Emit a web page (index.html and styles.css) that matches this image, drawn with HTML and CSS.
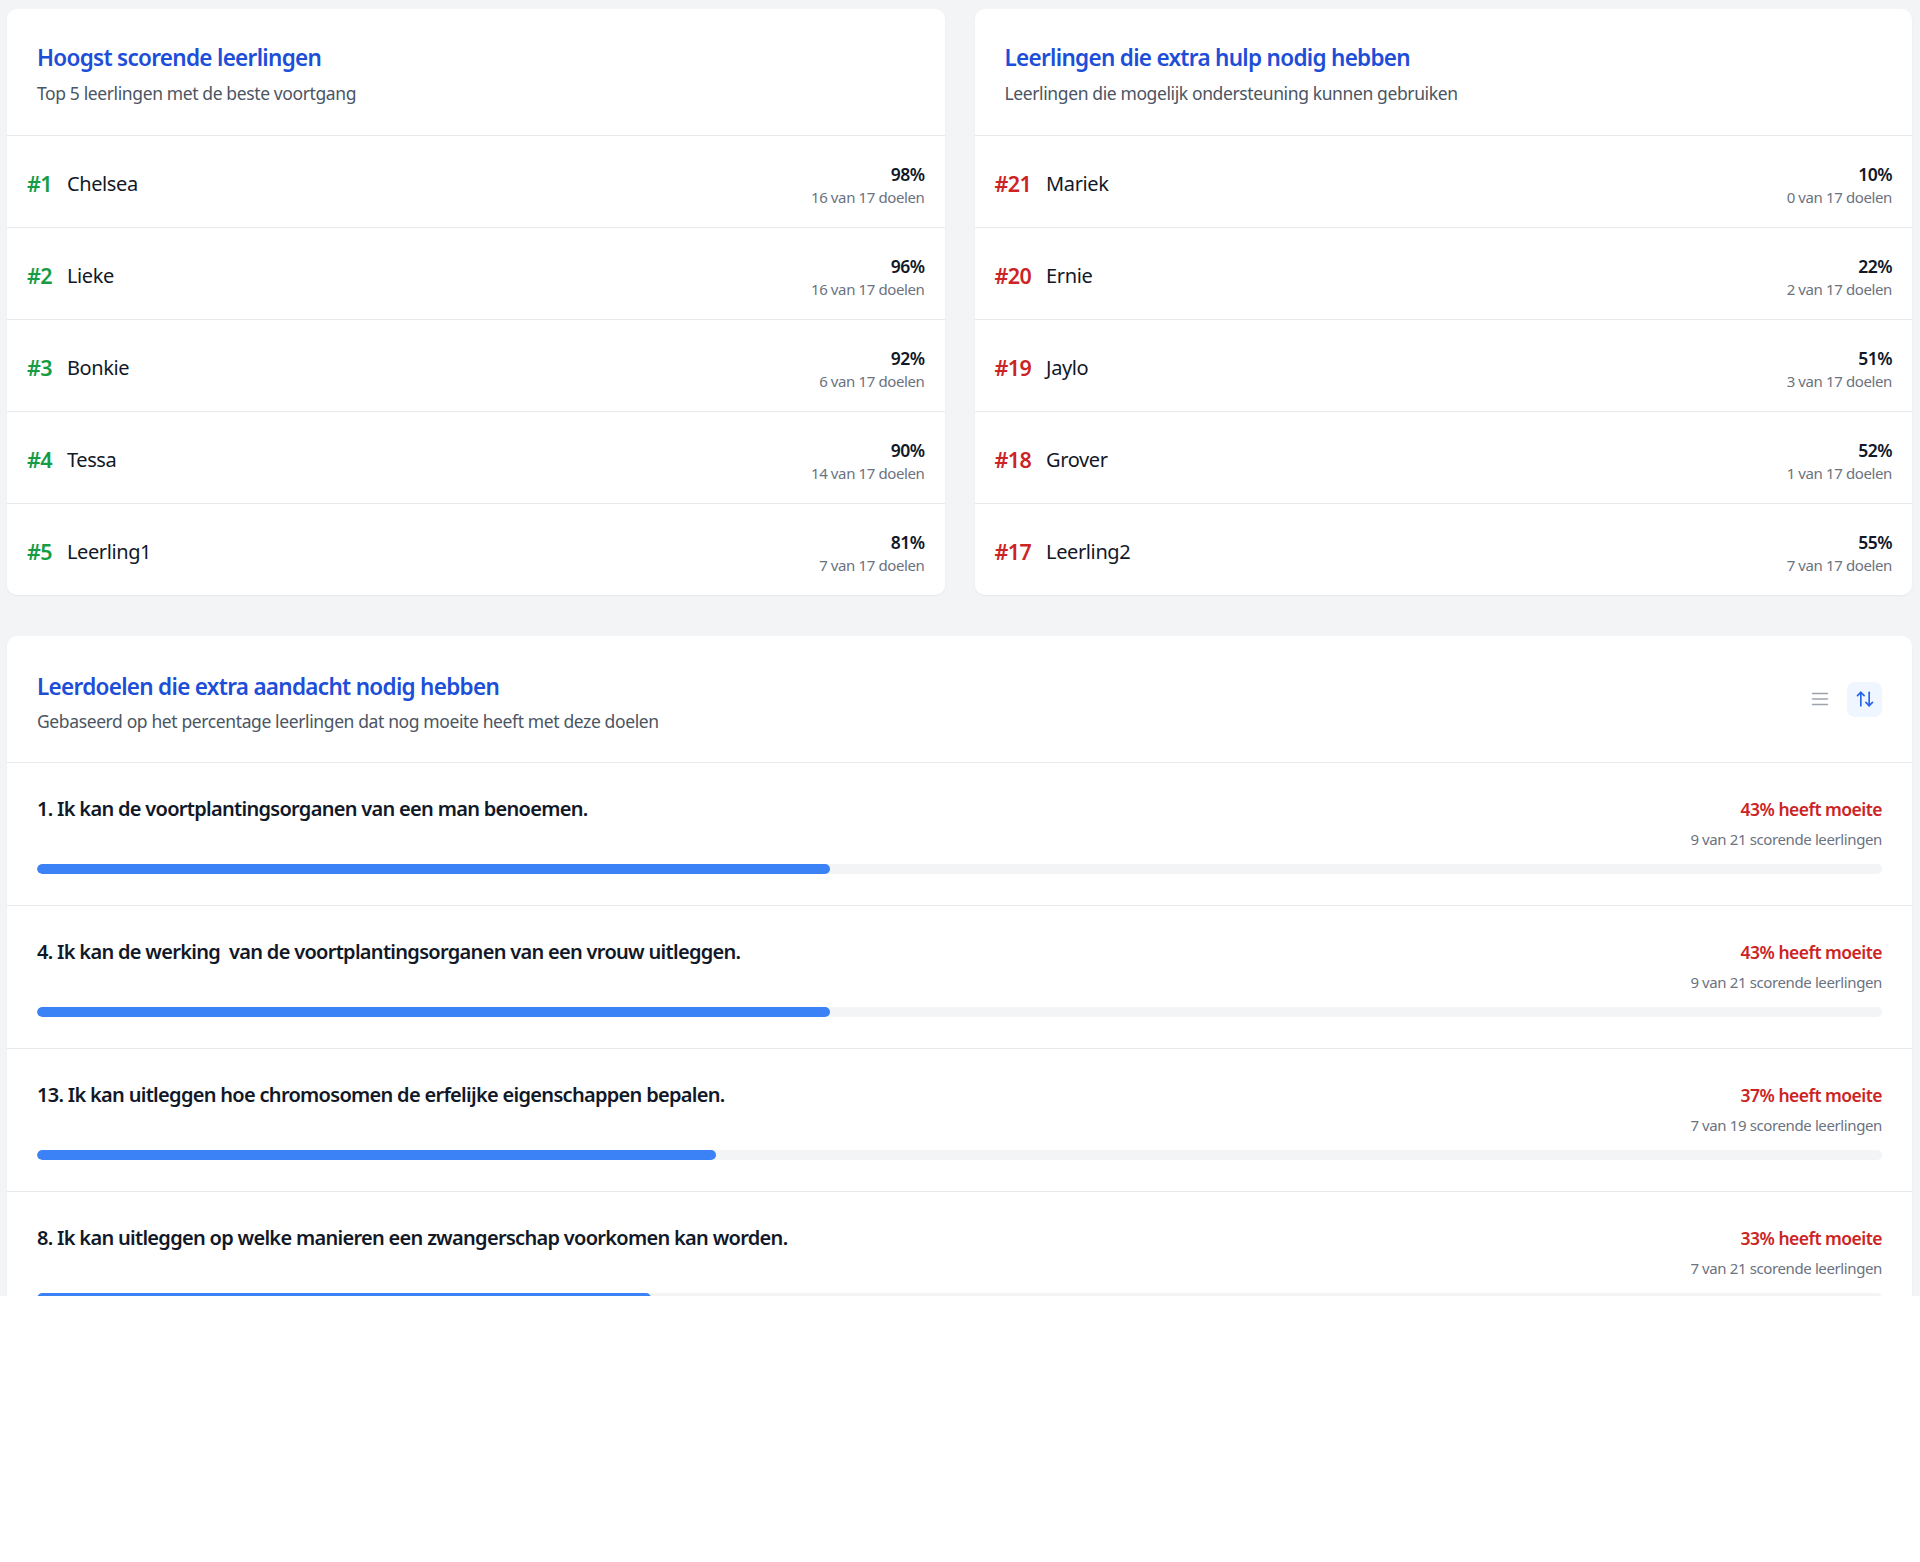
FILE: index.html
```html
<!DOCTYPE html>
<html lang="nl">
<head>
<meta charset="utf-8">
<title>Voortgang</title>
<link rel="stylesheet" href="styles.css">
</head>
<body>
<div class="page">
  <div class="grid2">
    <section class="card">
      <header class="card-head">
        <div>
          <h2 class="card-title">Hoogst scorende leerlingen</h2>
          <p class="card-sub">Top 5 leerlingen met de beste voortgang</p>
        </div>
      </header>
      <ul class="rank-list">
        <li class="rank-row"><div class="who"><span class="rank good">#1</span><span class="name">Chelsea</span></div><div class="score"><div class="pct">98%</div><div class="goals">16 van 17 doelen</div></div></li>
        <li class="rank-row"><div class="who"><span class="rank good">#2</span><span class="name">Lieke</span></div><div class="score"><div class="pct">96%</div><div class="goals">16 van 17 doelen</div></div></li>
        <li class="rank-row"><div class="who"><span class="rank good">#3</span><span class="name">Bonkie</span></div><div class="score"><div class="pct">92%</div><div class="goals">6 van 17 doelen</div></div></li>
        <li class="rank-row"><div class="who"><span class="rank good">#4</span><span class="name">Tessa</span></div><div class="score"><div class="pct">90%</div><div class="goals">14 van 17 doelen</div></div></li>
        <li class="rank-row"><div class="who"><span class="rank good">#5</span><span class="name">Leerling1</span></div><div class="score"><div class="pct">81%</div><div class="goals">7 van 17 doelen</div></div></li>
      </ul>
    </section>
    <section class="card">
      <header class="card-head">
        <div>
          <h2 class="card-title">Leerlingen die extra hulp nodig hebben</h2>
          <p class="card-sub">Leerlingen die mogelijk ondersteuning kunnen gebruiken</p>
        </div>
      </header>
      <ul class="rank-list">
        <li class="rank-row"><div class="who"><span class="rank bad">#21</span><span class="name">Mariek</span></div><div class="score"><div class="pct">10%</div><div class="goals">0 van 17 doelen</div></div></li>
        <li class="rank-row"><div class="who"><span class="rank bad">#20</span><span class="name">Ernie</span></div><div class="score"><div class="pct">22%</div><div class="goals">2 van 17 doelen</div></div></li>
        <li class="rank-row"><div class="who"><span class="rank bad">#19</span><span class="name">Jaylo</span></div><div class="score"><div class="pct">51%</div><div class="goals">3 van 17 doelen</div></div></li>
        <li class="rank-row"><div class="who"><span class="rank bad">#18</span><span class="name">Grover</span></div><div class="score"><div class="pct">52%</div><div class="goals">1 van 17 doelen</div></div></li>
        <li class="rank-row"><div class="who"><span class="rank bad">#17</span><span class="name">Leerling2</span></div><div class="score"><div class="pct">55%</div><div class="goals">7 van 17 doelen</div></div></li>
      </ul>
    </section>
  </div>

  <section class="card goals-card">
    <header class="card-head head-row">
      <div>
        <h2 class="card-title">Leerdoelen die extra aandacht nodig hebben</h2>
        <p class="card-sub">Gebaseerd op het percentage leerlingen dat nog moeite heeft met deze doelen</p>
      </div>
      <div class="tools">
        <button class="tool-btn" type="button" aria-label="Lijst">
          <svg width="20" height="20" viewBox="0 0 20 20" fill="none" stroke="currentColor" stroke-width="1.5" stroke-linecap="round"><line x1="2.5" y1="4.5" x2="17.5" y2="4.5"/><line x1="2.5" y1="10" x2="17.5" y2="10"/><line x1="2.5" y1="15.5" x2="17.5" y2="15.5"/></svg>
        </button>
        <button class="tool-btn active" type="button" aria-label="Sorteren">
          <svg width="20" height="20" viewBox="0 0 24 24" fill="none" stroke="currentColor" stroke-width="2" stroke-linecap="round" stroke-linejoin="round"><path d="m21 16-4 4-4-4"/><path d="M17 20V4"/><path d="m3 8 4-4 4 4"/><path d="M7 4v16"/></svg>
        </button>
      </div>
    </header>
    <ul class="goal-list">
      <li class="goal-row">
        <div class="goal-top">
          <h3 class="goal-title">1. Ik kan de voortplantingsorganen van een man benoemen.</h3>
          <div class="goal-stat"><div class="struggle">43% heeft moeite</div><div class="count">9 van 21 scorende leerlingen</div></div>
        </div>
        <div class="track"><div class="fill" style="width:43%"></div></div>
      </li>
      <li class="goal-row">
        <div class="goal-top">
          <h3 class="goal-title">4. Ik kan de werking &nbsp;van de voortplantingsorganen van een vrouw uitleggen.</h3>
          <div class="goal-stat"><div class="struggle">43% heeft moeite</div><div class="count">9 van 21 scorende leerlingen</div></div>
        </div>
        <div class="track"><div class="fill" style="width:43%"></div></div>
      </li>
      <li class="goal-row">
        <div class="goal-top">
          <h3 class="goal-title">13. Ik kan uitleggen hoe chromosomen de erfelijke eigenschappen bepalen.</h3>
          <div class="goal-stat"><div class="struggle">37% heeft moeite</div><div class="count">7 van 19 scorende leerlingen</div></div>
        </div>
        <div class="track"><div class="fill" style="width:36.8%"></div></div>
      </li>
      <li class="goal-row">
        <div class="goal-top">
          <h3 class="goal-title">8. Ik kan uitleggen op welke manieren een zwangerschap voorkomen kan worden.</h3>
          <div class="goal-stat"><div class="struggle">33% heeft moeite</div><div class="count">7 van 21 scorende leerlingen</div></div>
        </div>
        <div class="track"><div class="fill" style="width:33.3%"></div></div>
      </li>
    </ul>
  </section>
</div>
</body>
</html>
```

FILE: styles.css
```css
* { box-sizing: border-box; }
html, body { margin: 0; padding: 0; background: #ffffff; }
body {
  font-family: "Noto Sans", "Open Sans", "Liberation Sans", sans-serif;
  color: #111827;
  letter-spacing: -0.024em;
}
.page {
  background: #f3f4f6;
  height: 1296px;
  overflow: hidden;
  padding: 9px 8px 0 7px;
}
.grid2 {
  display: grid;
  grid-template-columns: 1fr 1fr;
  gap: 30px;
  margin-bottom: 41px;
}
.card {
  background: #ffffff;
  border-radius: 10px;
  box-shadow: 0 1px 2px rgba(0,0,0,0.05);
  overflow: hidden;
}
.card-head {
  display: flex;
  align-items: flex-start;
  justify-content: space-between;
  padding: 31px 30px 0;
  height: 127px;
  border-bottom: 1px solid #e9eaed;
}
.head-row { padding-top: 32.5px; }
.tools { align-self: center; margin-top: -32.5px; display: flex; align-items: center; gap: 10px; }
.card-title {
  margin: 0;
  font-size: 22.5px;
  line-height: 35px;
  font-weight: 600;
  letter-spacing: -0.031em;
  color: #1d4ed8;
}
.card-sub {
  margin: 5.5px 0 0;
  font-size: 17.5px;
  line-height: 25px;
  color: #4b5563;
}
.rank-list, .goal-list { list-style: none; margin: 0; padding: 0; }
.rank-row {
  display: flex;
  align-items: center;
  justify-content: space-between;
  height: 92px;
  padding: 2px 20px 0;
  border-top: 1px solid #e9eaed;
}
.rank-row:first-child { border-top: 0; height: 91px; }
.who { display: flex; align-items: center; gap: 15px; margin-top: 2px; }
.rank { font-size: 21.5px; font-weight: 600; line-height: 30px; letter-spacing: -0.03em; }
.rank.good { color: #169c45; }
.rank.bad { color: #cc2424; }
.name { font-size: 20px; line-height: 30px; color: #111827; }
.score { text-align: right; margin-top: 4px; }
.pct { font-size: 17.5px; font-weight: 600; line-height: 24px; color: #111827; letter-spacing: -0.03em; }
.goals { font-size: 15px; line-height: 20px; color: #6b7280; margin-top: 1px; }

.tool-btn {
  width: 35px; height: 35px;
  display: flex; align-items: center; justify-content: center;
  border: 0; padding: 0; border-radius: 8px;
  background: transparent; color: #9ca3af;
}
.tool-btn.active { background: #eff6ff; color: #2563eb; }

.goal-row {
  padding: 31px 30px 0;
  height: 143px;
  border-top: 1px solid #e9eaed;
}
.goal-row:first-child { border-top: 0; height: 142px; }
.goal-top { display: flex; justify-content: space-between; align-items: flex-start; }
.goal-title { margin: 0; font-size: 20px; line-height: 30px; font-weight: 600; color: #111827; letter-spacing: -0.035em; }
.goal-stat { text-align: right; }
.struggle { font-size: 17.5px; line-height: 30px; font-weight: 600; color: #cc2424; letter-spacing: -0.03em; }
.count { font-size: 15px; line-height: 20px; margin-top: 5px; color: #6b7280; }
.track { margin-top: 15px; height: 10px; background: #f3f4f6; border-radius: 999px; overflow: hidden; }
.fill { height: 100%; background: #3b82f6; border-radius: 999px; }
```
